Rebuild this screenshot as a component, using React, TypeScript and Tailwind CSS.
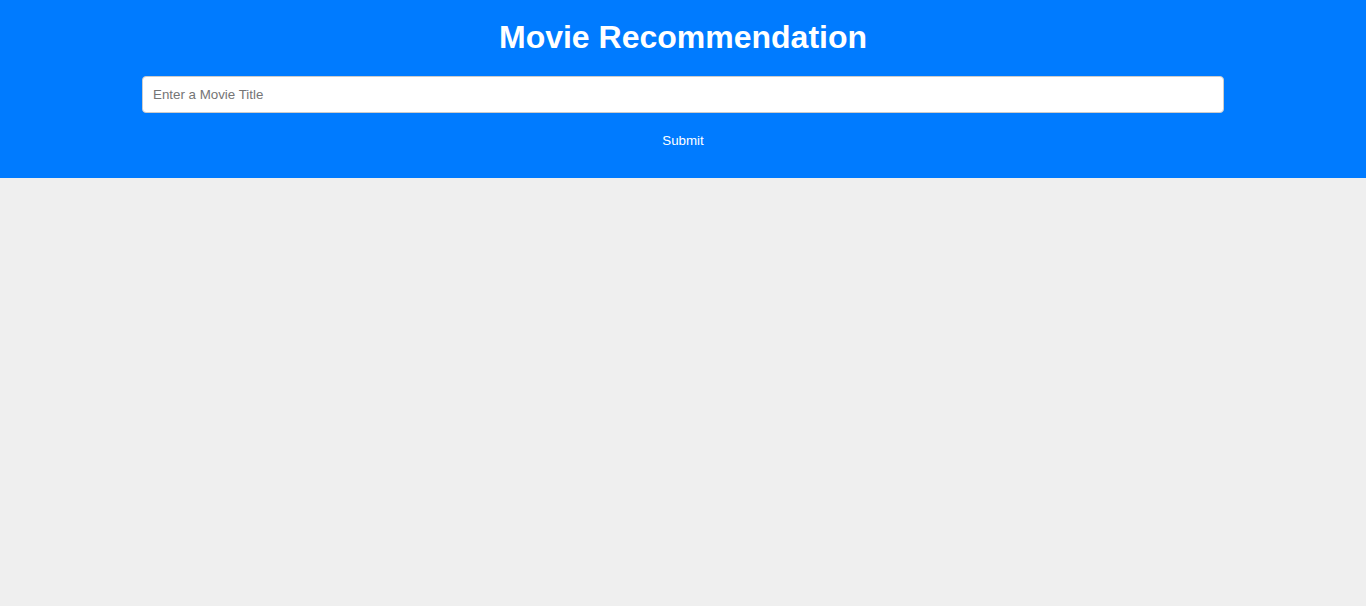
import React from "react";

export default function App() {
  return (
    <div className="min-h-[606px] bg-[#efefef]" style={{ fontFamily: '"Liberation Sans", Arial, sans-serif' }}>
      <div className="bg-[#007bff] h-[178px] flex flex-col items-center pt-[19px]">
        <h1 className="text-white text-[32px] font-bold leading-[37px] m-0">Movie Recommendation</h1>
        <input
          type="text"
          placeholder="Enter a Movie Title"
          className="mt-[20px] w-[1082px] h-[37px] bg-white rounded-[4px] border border-[#ccc] px-[10px] text-[13.33px] text-[#333] placeholder:text-[#757575] outline-none"
        />
        <button className="mt-[11px] h-[34px] px-[20px] bg-[#007bff] text-white text-[13.33px]">Submit</button>
      </div>
    </div>
  );
}
